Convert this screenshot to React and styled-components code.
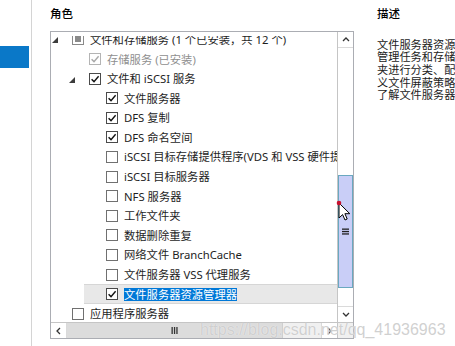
import React from 'react';
import styled, { createGlobalStyle } from 'styled-components';

const GlobalStyle = createGlobalStyle`
  html, body { margin: 0; padding: 0; background: #fff; overflow: hidden; }
  body { font-family: "Noto Sans", "Noto Sans CJK SC", sans-serif; }
`;

const FONT = '"Noto Sans", "Noto Sans CJK SC", sans-serif';

const Page = styled.div`
  position: relative;
  width: 455px;
  height: 346px;
  overflow: hidden;
  display: flex;
  background: #fff;
  font-family: ${FONT};
`;

const Sidebar = styled.nav`
  width: 32px;
  flex: none;
  box-sizing: border-box;
  border-right: 1px solid #d4d4d4;
  padding-top: 46px;
`;

const NavItem = styled.div`
  width: 29px;
  height: 22px;
  background: ${(p) => (p.$active ? '#0a78c8' : 'transparent')};
`;

const Main = styled.div`
  display: flex;
  gap: 23px;
  padding-left: 18px;
  flex: 1;
  min-width: 0;
`;

const Column = styled.section`
  flex: none;
  width: ${(p) => p.$width}px;
  display: flex;
  flex-direction: column;
`;

const Heading = styled.h2`
  margin: 0 0 9px;
  padding-top: 6px;
  font-size: 11.5px;
  font-weight: 500;
  line-height: 16px;
  color: #000;
`;

const ListBox = styled.div`
  width: 304px;
  height: 308px;
  box-sizing: border-box;
  border: 1px solid #abadb3;
  display: grid;
  grid-template-columns: 1fr 16px;
  grid-template-rows: 1fr 16px;
`;

const Viewport = styled.div`
  display: flex;
  flex-direction: column;
  padding-top: 4px;
  min-width: 0;
  min-height: 0;
  overflow: hidden;
`;

const Clip = styled.div`
  flex: 1;
  min-height: 0;
  overflow: hidden;
`;

const Rows = styled.ul`
  list-style: none;
  margin: -6.4px 0 0;
  padding: 0;
`;

const Row = styled.li`
  display: flex;
  align-items: center;
  height: 19.6px;
  padding-left: ${(p) => p.$level * 17}px;
  white-space: nowrap;
`;

const RowBody = styled.div`
  flex: 1;
  height: 100%;
  display: flex;
  align-items: center;
  box-sizing: border-box;
  margin-left: ${(p) => (p.$selected ? -1 : 0)}px;
  padding-left: ${(p) => (p.$selected ? 1 : 0)}px;
  background: ${(p) => (p.$selected ? '#e8e8e8' : 'transparent')};
  border-top: 1px solid ${(p) => (p.$selected ? '#d6d6d6' : 'transparent')};
  border-bottom: 1px solid ${(p) => (p.$selected ? '#d6d6d6' : 'transparent')};
`;

const Expander = styled.span`
  width: 21px;
  flex: none;
  box-sizing: border-box;
  padding-left: 1px;
  padding-top: 2px;
  display: flex;
  align-items: center;
`;

const Box = styled.span`
  width: 12px;
  height: 12px;
  flex: none;
  box-sizing: border-box;
  margin-right: 6px;
  border: 1px solid ${(p) => (p.$disabled ? '#b4b4b4' : p.$mixed ? '#8a8a8a' : p.$checked ? '#4a4a4a' : '#707070')};
  background: #fff;
  display: flex;
  align-items: center;
  justify-content: center;
`;

const MixedMark = styled.span`
  width: 6px;
  height: 6px;
  background: #8a8a8a;
`;

const Label = styled.span`
  font-size: 11.3px;
  line-height: 13px;
  color: ${(p) => (p.$selected ? '#fff' : p.$disabled ? '#8f8f8f' : '#1e1e1e')};
  background: ${(p) => (p.$selected ? '#0078d7' : 'transparent')};
`;

const VScroll = styled.div`
  border-left: 1px solid #c5c5c5;
  display: flex;
  flex-direction: column;
  background: #fff;
  min-height: 0;
`;

const ScrollBtn = styled.div`
  flex: none;
  ${(p) => (p.$vertical ? 'height: 15px;' : 'width: 15px;')}
  display: flex;
  align-items: center;
  justify-content: center;
  background: #fff;
  ${(p) => p.$edge}: 1px solid #dadada;
`;

const VTrack = styled.div`
  flex: 1;
  display: flex;
  flex-direction: column;
  min-height: 0;
`;

const VThumb = styled.div`
  flex: none;
  box-sizing: border-box;
  background: #c9cef7;
  border: 1px solid #6aa8c0;
  display: flex;
  align-items: center;
  justify-content: center;
`;

const HScroll = styled.div`
  border-top: 1px solid #c5c5c5;
  display: flex;
  background: #f0f0f0;
  min-width: 0;
`;

const HTrack = styled.div`
  flex: 1;
  display: flex;
  min-width: 0;
`;

const HThumb = styled.div`
  flex: none;
  box-sizing: border-box;
  background: #dcdcdc;
  border-right: 1px solid #cfcfcf;
  display: flex;
  align-items: center;
  justify-content: center;
`;

const Corner = styled.div`
  border-top: 1px solid #c5c5c5;
  border-left: 1px solid #c5c5c5;
  background: #f0f0f0;
`;

const DescText = styled.div`
  margin-top: 7.8px;
  font-size: 11.2px;
  line-height: 12.6px;
  color: #222;
  white-space: nowrap;
`;

const DescLine = styled.div`
  height: 12.6px;
`;

const Watermark = styled.div`
  position: absolute;
  left: 200px;
  top: 320px;
  font-family: "Liberation Sans", Arial, sans-serif;
  font-size: 16px;
  line-height: 20px;
  color: rgba(200, 200, 200, 0.85);
  text-shadow: 0 0 1px rgba(255, 255, 255, 0.9);
  white-space: nowrap;
  pointer-events: none;
`;

const Cursor = styled.svg`
  position: absolute;
  left: 336px;
  top: 200px;
  overflow: visible;
  pointer-events: none;
`;

const rows = [
  { level: 0, expander: true, state: 'mixed', label: '文件和存储服务 (1 个已安装，共 12 个)' },
  { level: 1, state: 'checked', disabled: true, label: '存储服务 (已安装)' },
  { level: 1, expander: true, state: 'checked', label: '文件和 iSCSI 服务' },
  { level: 2, state: 'checked', label: '文件服务器' },
  { level: 2, state: 'checked', label: 'DFS 复制' },
  { level: 2, state: 'checked', label: 'DFS 命名空间' },
  { level: 2, state: 'off', label: 'iSCSI 目标存储提供程序(VDS 和 VSS 硬件提供程序)' },
  { level: 2, state: 'off', label: 'iSCSI 目标服务器' },
  { level: 2, state: 'off', label: 'NFS 服务器' },
  { level: 2, state: 'off', label: '工作文件夹' },
  { level: 2, state: 'off', label: '数据删除重复' },
  { level: 2, state: 'off', label: '网络文件 BranchCache' },
  { level: 2, state: 'off', label: '文件服务器 VSS 代理服务' },
  { level: 2, state: 'checked', selected: true, label: '文件服务器资源管理器' },
  { level: 0, state: 'off', label: '应用程序服务器' },
];

const descLines = [
  '文件服务器资源管理器可帮助你',
  '管理任务和存储报告、对文件和',
  '夹进行分类、配置文件夹配额和',
  '义文件屏蔽策略。',
  '了解文件服务器资源管理器',
];

function Triangle() {
  return (
    <svg width="6" height="6" viewBox="0 0 6 6">
      <polygon points="6,0 6,6 0,6" fill="#3c3c3c" />
    </svg>
  );
}

function CheckBox({ state, disabled }) {
  const checked = state === 'checked';
  const mixed = state === 'mixed';
  return (
    <Box $checked={checked} $mixed={mixed} $disabled={disabled}>
      {mixed && <MixedMark />}
      {checked && (
        <svg width="10" height="10" viewBox="0 0 10 10">
          <polyline
            points="1.6,5.2 4,7.6 8.6,2.2"
            fill="none"
            stroke={disabled ? '#a8a8a8' : '#111'}
            strokeWidth="1.4"
          />
        </svg>
      )}
    </Box>
  );
}

function Chevron({ dir }) {
  const paths = {
    up: 'M1 5 L4 2 L7 5',
    down: 'M1 2 L4 5 L7 2',
    left: 'M5 1 L2 4 L5 7',
    right: 'M2 1 L5 4 L2 7',
  };
  return (
    <svg width="8" height="8" viewBox="0 0 8 8">
      <path d={paths[dir]} fill="none" stroke="#333" strokeWidth="1.3" />
    </svg>
  );
}

export default function App() {
  const vThumb = { offset: 127, size: 113 };
  const hThumb = { size: 216 };
  return (
    <>
      <GlobalStyle />
      <Page>
        <Sidebar>
          <NavItem $active />
        </Sidebar>
        <Main>
          <Column $width={304}>
            <Heading>角色</Heading>
            <ListBox>
              <Viewport>
                <Clip>
                  <Rows>
                    {rows.map((r, i) => (
                      <Row key={i} $level={r.level}>
                        <RowBody $selected={r.selected}>
                          <Expander>{r.expander && <Triangle />}</Expander>
                          <CheckBox state={r.state} disabled={r.disabled} />
                          <Label $selected={r.selected} $disabled={r.disabled}>
                            {r.label}
                          </Label>
                        </RowBody>
                      </Row>
                    ))}
                  </Rows>
                </Clip>
              </Viewport>
              <VScroll>
                <ScrollBtn $vertical $edge="border-bottom">
                  <Chevron dir="up" />
                </ScrollBtn>
                <VTrack>
                  <VThumb style={{ marginTop: vThumb.offset, height: vThumb.size }}>
                    <svg width="7" height="7" viewBox="0 0 7 7">
                      <rect x="0" y="0.5" width="7" height="1.3" fill="#222" />
                      <rect x="0" y="2.9" width="7" height="1.3" fill="#222" />
                      <rect x="0" y="5.3" width="7" height="1.3" fill="#222" />
                    </svg>
                  </VThumb>
                </VTrack>
                <ScrollBtn $vertical $edge="border-top">
                  <Chevron dir="down" />
                </ScrollBtn>
              </VScroll>
              <HScroll>
                <ScrollBtn $edge="border-right">
                  <Chevron dir="left" />
                </ScrollBtn>
                <HTrack>
                  <HThumb style={{ width: hThumb.size }}>
                    <svg width="7" height="7" viewBox="0 0 7 7">
                      <rect x="0.5" y="0" width="1.3" height="7" fill="#333" />
                      <rect x="2.9" y="0" width="1.3" height="7" fill="#333" />
                      <rect x="5.3" y="0" width="1.3" height="7" fill="#333" />
                    </svg>
                  </HThumb>
                </HTrack>
                <ScrollBtn $edge="border-left">
                  <Chevron dir="right" />
                </ScrollBtn>
              </HScroll>
              <Corner />
            </ListBox>
          </Column>
          <Column $width={200}>
            <Heading>描述</Heading>
            <DescText>
              {descLines.map((l, i) => (
                <DescLine key={i}>{l}</DescLine>
              ))}
            </DescText>
          </Column>
        </Main>
        <Watermark>https://blog.csdn.net/qq_41936963</Watermark>
        <Cursor width="14" height="22" viewBox="-3 -3 14 22">
          <path
            d="M0 0 L0 15 L3.6 11.6 L6 17 L8.2 16 L5.9 10.7 L10.8 10.7 Z"
            fill="#fff"
            stroke="#000"
            strokeWidth="1"
            strokeLinejoin="round"
          />
          <circle cx="0" cy="0" r="2.3" fill="#c8102e" />
        </Cursor>
      </Page>
    </>
  );
}
